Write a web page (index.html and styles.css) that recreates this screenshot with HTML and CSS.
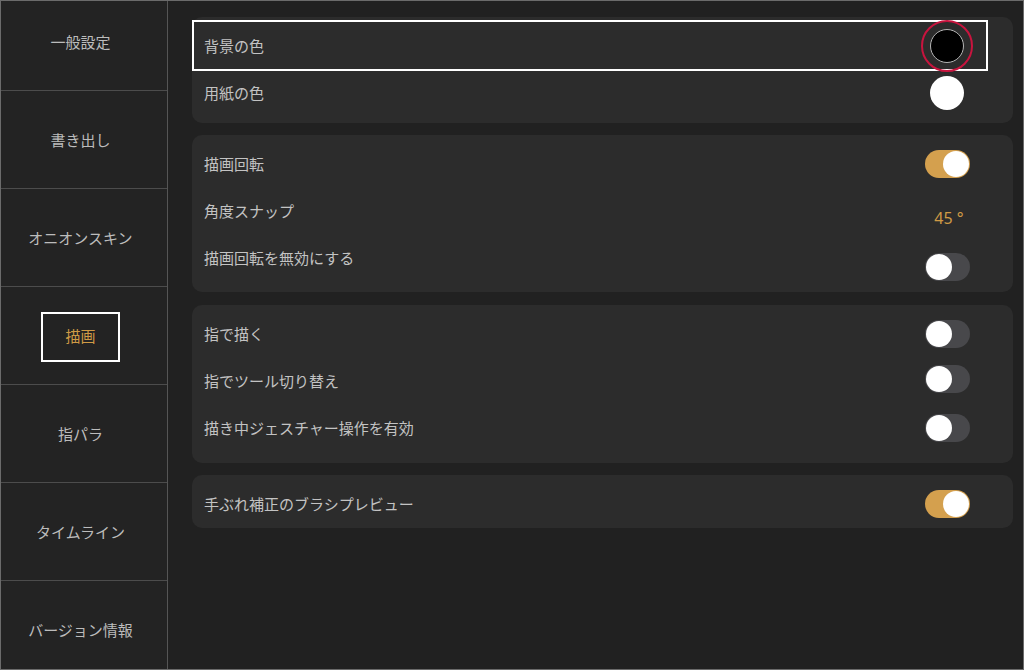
FILE: index.html
```html
<!DOCTYPE html>
<html lang="ja">
<head>
    <meta charset="UTF-8">
    <meta name="viewport" content="width=device-width, initial-scale=1.0">
    <title>設定 - 描画</title>
    <link rel="stylesheet" href="styles.css">
</head>
<body>
    <div class="screen">
        <nav class="sidebar">
            <div class="nav-item nav-first">一般設定</div>
            <div class="nav-item">書き出し</div>
            <div class="nav-item">オニオンスキン</div>
            <div class="nav-item"><span class="nav-selected">描画</span></div>
            <div class="nav-item">指パラ</div>
            <div class="nav-item">タイムライン</div>
            <div class="nav-item">バージョン情報</div>
        </nav>
        <main class="content">
            <section class="card card-colors">
                <div class="row row-marked">
                    <span class="label">背景の色</span>
                    <span class="control"><span class="swatch swatch-black"></span></span>
                </div>
                <div class="row row-paper">
                    <span class="label">用紙の色</span>
                    <span class="control"><span class="swatch swatch-white"></span></span>
                </div>
            </section>
            <section class="card card-rotate">
                <div class="row">
                    <span class="label">描画回転</span>
                    <span class="control"><span class="toggle on"></span></span>
                </div>
                <div class="row">
                    <span class="label">角度スナップ</span>
                    <span class="control control-low"><span class="value">45 °</span></span>
                </div>
                <div class="row">
                    <span class="label">描画回転を無効にする</span>
                    <span class="control control-lower"><span class="toggle"></span></span>
                </div>
            </section>
            <section class="card card-finger">
                <div class="row">
                    <span class="label">指で描く</span>
                    <span class="control"><span class="toggle"></span></span>
                </div>
                <div class="row">
                    <span class="label">指でツール切り替え</span>
                    <span class="control control-high"><span class="toggle"></span></span>
                </div>
                <div class="row">
                    <span class="label">描き中ジェスチャー操作を有効</span>
                    <span class="control"><span class="toggle"></span></span>
                </div>
            </section>
            <section class="card card-preview">
                <div class="row">
                    <span class="label">手ぶれ補正のブラシプレビュー</span>
                    <span class="control"><span class="toggle on"></span></span>
                </div>
            </section>
        </main>
    </div>
</body>
</html>
```

FILE: styles.css
```css
body {
    margin: 0;
    background-color: #212121;
    font-family: "Noto Sans CJK JP", "Noto Sans", sans-serif;
}
.screen {
    box-sizing: border-box;
    width: 1024px;
    height: 670px;
    border: 1px solid #6b6b6b;
    display: flex;
    overflow: hidden;
    background-color: #212121;
}
.sidebar {
    width: 166px;
    flex-shrink: 0;
    background-color: #232323;
    border-right: 1px solid #555555;
    display: flex;
    flex-direction: column;
    overflow: hidden;
}
.nav-item {
    box-sizing: border-box;
    height: 98px;
    flex-shrink: 0;
    padding: 0 7px 1px 0;
    border-bottom: 1px solid #4c4c4c;
    display: flex;
    align-items: center;
    justify-content: center;
    font-size: 15px;
    color: #bcbcbc;
}
.nav-first {
    height: 90px;
    padding-bottom: 8px;
}
.nav-selected {
    box-sizing: border-box;
    width: 79px;
    height: 50px;
    margin-top: 3px;
    padding-bottom: 3px;
    border: 2px solid #ffffff;
    display: flex;
    align-items: center;
    justify-content: center;
    color: #cf9a45;
}
.content {
    flex: 1;
    padding: 16px 10px 0 24px;
    display: flex;
    flex-direction: column;
}
.card {
    background-color: #2c2c2c;
    border-radius: 10px;
}
.card-colors {
    height: 106px;
    box-sizing: border-box;
    padding: 3px 0 5px;
}
.card-rotate {
    margin-top: 12px;
    padding: 5px 0 11px;
}
.card-finger {
    margin-top: 13px;
    padding: 5px 0 12px;
}
.card-preview {
    margin-top: 12px;
    padding: 5px 0 1px;
}
.row {
    height: 47px;
    padding: 0 43px 0 12px;
    display: flex;
    align-items: center;
    justify-content: space-between;
}
.row-marked {
    box-sizing: border-box;
    height: 51px;
    margin-right: 25px;
    padding-left: 10px;
    padding-right: 16px;
    border: 2px solid #ffffff;
}
.row-paper .label {
    margin-bottom: 4px;
}
.label {
    font-size: 15px;
    color: #c3c3c3;
}
.control {
    width: 46px;
    display: flex;
    justify-content: center;
}
.control-low {
    margin-top: 16px;
}
.control-lower {
    margin-top: 19px;
}
.control-high {
    margin-bottom: 4px;
}
.swatch {
    box-sizing: border-box;
    width: 34px;
    height: 34px;
    border-radius: 50%;
    position: relative;
}
.swatch-black {
    background-color: #000000;
    border: 1px solid #b5b5b5;
    margin-top: 1px;
}
.swatch-black::after {
    content: "";
    position: absolute;
    left: -10px;
    top: -10px;
    width: 48px;
    height: 48px;
    border: 2.5px solid #c8143e;
    border-radius: 50%;
}
.swatch-white {
    background-color: #ffffff;
    margin-bottom: 3px;
}
.value {
    font-family: "Noto Sans", sans-serif;
    font-size: 16px;
    color: #cf9a45;
    margin-left: 4px;
    margin-bottom: 2px;
}
.toggle {
    box-sizing: border-box;
    width: 45px;
    height: 28px;
    border-radius: 14px;
    background-color: #48484b;
    position: relative;
}
.toggle::after {
    content: "";
    position: absolute;
    left: 1px;
    top: 1px;
    width: 26px;
    height: 26px;
    border-radius: 50%;
    background-color: #ffffff;
}
.toggle.on {
    background-color: #d4a04e;
}
.toggle.on::after {
    left: 18px;
}
```
